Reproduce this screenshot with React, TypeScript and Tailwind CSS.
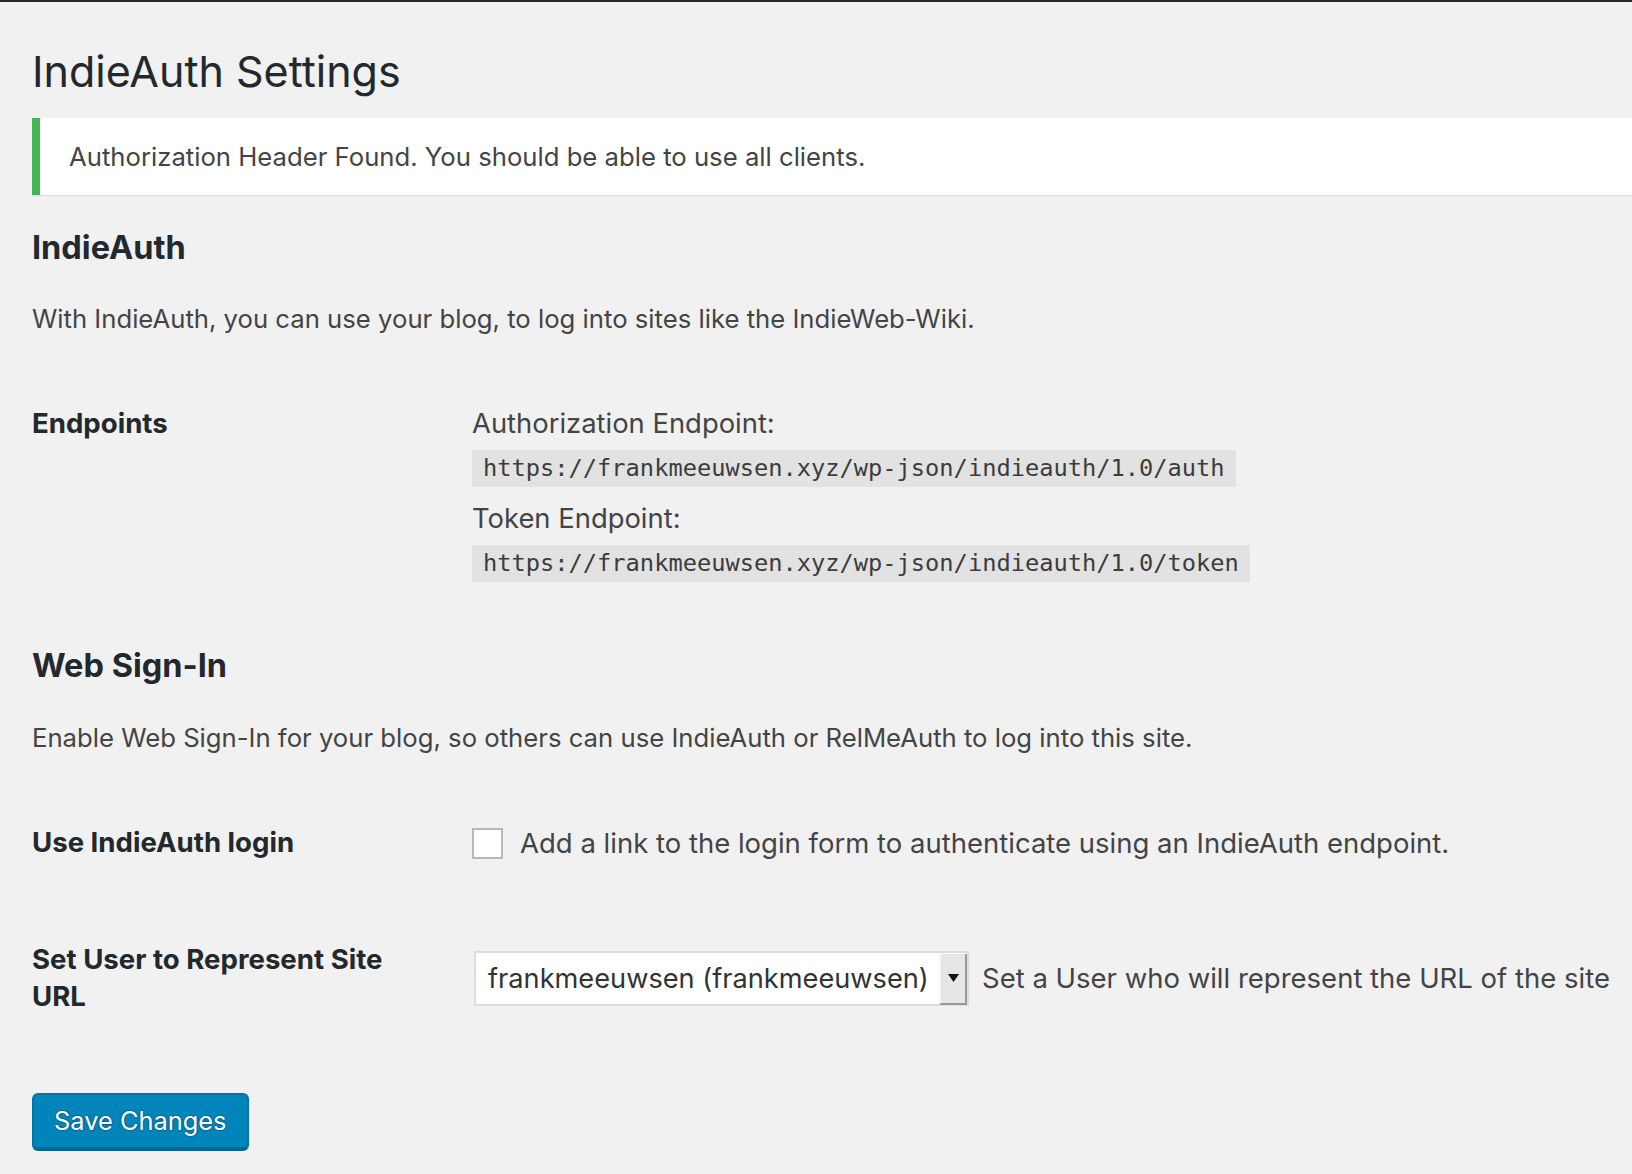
import React from 'react';

const sans = { fontFamily: 'Inter, "Noto Sans", sans-serif' };
const mono = { fontFamily: '"DejaVu Sans Mono", monospace' };

const App: React.FC = () => {
  return (
    <div className="min-h-screen bg-[#f1f1f1] border-t-2 border-[#23282d] text-[#444]" style={sans}>
      <div className="pl-[32px]">
        <h1 className="mt-[41px] text-[43px] leading-[56px] font-normal text-[#23282d]">IndieAuth Settings</h1>

        {/* Notice */}
        <div className="mt-[19px] bg-white border-l-[8px] border-[#46b450] shadow-[0_1px_1px_rgba(0,0,0,0.08)] pl-[29px] pt-[21px] pb-[20px]">
          <p className="text-[25.7px] leading-[36px]">Authorization Header Found. You should be able to use all clients.</p>
        </div>

        {/* IndieAuth section */}
        <h2 className="mt-[33px] text-[32.5px] leading-[40px] font-bold text-[#23282d]">IndieAuth</h2>
        <p className="mt-[33px] text-[25.7px] leading-[36px]">
          With IndieAuth, you can use your blog, to log into sites like the IndieWeb-Wiki.
        </p>

        <div className="mt-[68px] grid grid-cols-[440px_1fr]">
          <div className="text-[27.6px] leading-[36px] font-bold text-[#23282d]">Endpoints</div>
          <div>
            <div className="text-[27.4px] leading-[36px]">Authorization Endpoint:</div>
            <div className="mt-[9px]">
              <code className="inline-block h-[37px] px-[11px] bg-[#e2e2e2] text-[23.7px] leading-[37px] text-[#3c3c3c]" style={mono}>
                https://frankmeeuwsen.xyz/wp-json/indieauth/1.0/auth
              </code>
            </div>
            <div className="mt-[13px] text-[27.4px] leading-[36px]">Token Endpoint:</div>
            <div className="mt-[9px]">
              <code className="inline-block h-[37px] px-[11px] bg-[#e2e2e2] text-[23.7px] leading-[37px] text-[#3c3c3c]" style={mono}>
                https://frankmeeuwsen.xyz/wp-json/indieauth/1.0/token
              </code>
            </div>
          </div>
        </div>

        {/* Web Sign-In section */}
        <h2 className="mt-[64px] text-[32.5px] leading-[40px] font-bold text-[#23282d]">Web Sign-In</h2>
        <p className="mt-[34px] text-[25.7px] leading-[36px]">
          Enable Web Sign-In for your blog, so others can use IndieAuth or RelMeAuth to log into this site.
        </p>

        <div className="mt-[68px] grid grid-cols-[440px_1fr]">
          <div className="text-[27.6px] leading-[36px] font-bold text-[#23282d]">Use IndieAuth login</div>
          <label className="flex items-start gap-[17px]">
            <span className="mt-[4px] w-[31px] h-[31px] shrink-0 bg-white border-2 border-[#b4b9be]" />
            <span className="mt-[1px] text-[27.5px] leading-[36px]">Add a link to the login form to authenticate using an IndieAuth endpoint.</span>
          </label>
        </div>

        <div className="mt-[80px] grid grid-cols-[440px_1fr]">
          <div className="w-[400px] text-[27.6px] leading-[37px] font-bold text-[#23282d]">Set User to Represent Site<br />URL</div>
          <div className="flex items-center gap-[13px] ml-[2px]">
            <div className="flex h-[55px] w-[495px] shrink-0 border-2 border-[#dddddd] bg-white">
              <div className="flex-1 overflow-hidden whitespace-nowrap pl-[12px] text-[27.2px] leading-[51px] text-[#333]">frankmeeuwsen (frankmeeuwsen)</div>
              <div className="mt-[1px] mb-[-1px] w-[28px] flex items-center justify-center bg-[#e6e6e6] border-l-2 border-l-[#f6f6f6] border-r-2 border-r-[#9a9a9a] border-b-2 border-b-[#9a9a9a]">
                <svg width="11" height="8" viewBox="0 0 11 8"><path d="M0 0 H11 L5.5 8 Z" fill="#111" /></svg>
              </div>
            </div>
            <span className="whitespace-nowrap text-[27.5px] leading-[36px]">Set a User who will represent the URL of the site</span>
          </div>
        </div>

        <button className="mt-[78px] h-[58px] px-[20px] rounded-[6px] bg-[#0085ba] border-2 border-[#0073aa] border-b-[4px] border-b-[#006799] text-white text-[25.4px] leading-[36px] [text-shadow:0_-1px_1px_#006799,1px_0_1px_#006799,0_1px_1px_#006799,-1px_0_1px_#006799]">
          Save Changes
        </button>
      </div>
    </div>
  );
};

export default App;
